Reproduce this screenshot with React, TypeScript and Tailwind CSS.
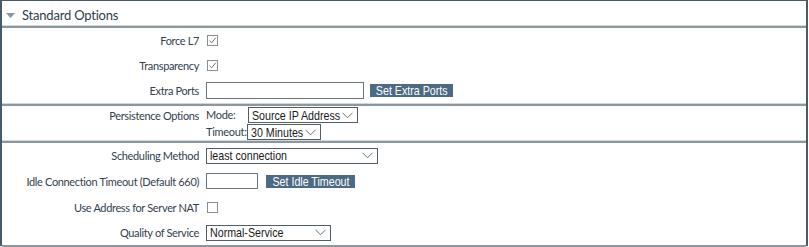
import React from "react";

const labelCls =
  "w-[204px] shrink-0 pr-[7px] text-right text-[11px] text-[#33414f] leading-none whitespace-nowrap tracking-[-0.35px]";
const ctrlFont = {
  fontFamily: '"Liberation Sans", Arial, sans-serif',
};

function Check({ checked }: { checked?: boolean }) {
  return (
    <div className="w-[11px] h-[11px] ml-px border border-[#8a8f94] bg-white flex items-center justify-center shrink-0">
      {checked && (
        <svg width="9" height="9" viewBox="0 0 9 9">
          <path d="M1.5 4.6 L3.6 6.8 L7.8 1.8" fill="none" stroke="#6f767c" strokeWidth="1" />
        </svg>
      )}
    </div>
  );
}

function Select({ text, w }: { text: string; w: number }) {
  return (
    <div
      className="h-[16px] shrink-0 whitespace-nowrap border border-[#4f5d69] bg-white flex items-center pl-[3px] pr-[4px] text-[13px] text-[#1a1a1a] overflow-hidden"
      style={{ ...ctrlFont, width: w }}
    >
      <div className="flex-1 min-w-0 leading-none">
        <span className="inline-block origin-left scale-x-[0.82]">{text}</span>
      </div>
      <svg width="11" height="7" viewBox="0 0 11 7" className="shrink-0">
        <path d="M0.5 0.8 L5.5 5.8 L10.5 0.8" fill="none" stroke="#6a7075" strokeWidth="1" />
      </svg>
    </div>
  );
}

function Btn({ text, w }: { text: string; w: number }) {
  return (
    <div
      className="h-[13px] shrink-0 whitespace-nowrap bg-[#4c6a84] text-white text-[13px] leading-none flex items-center justify-center overflow-visible"
      style={{ ...ctrlFont, width: w }}
    >
      <span className="inline-block origin-center scale-x-[0.82]">{text}</span>
    </div>
  );
}

function Sep() {
  return (
    <div className="shrink-0">
      <div className="h-px bg-[#d3d7da]" />
      <div className="h-[2px] bg-[#8c979d]" />
    </div>
  );
}

export default function App() {
  return (
    <div
      className="w-[809px] h-[247px] bg-white"
      style={{ fontFamily: 'Lato, "Open Sans", sans-serif' }}
    >
      <div className="w-[808px] h-[246px] border-l-2 border-r-2 border-t border-[#475a69] flex flex-col">
        <div className="h-[24px] shrink-0 flex items-center pl-[4px] pt-[5px] gap-[7px]">
          <svg width="9" height="5" viewBox="0 0 9 5">
            <path d="M0 0 L9 0 L4.5 5 Z" fill="#8d959b" />
          </svg>
          <span className="text-[13px] text-[#2f3d4a] leading-none tracking-[-0.2px]">Standard Options</span>
        </div>
        <Sep />
        <div className="flex flex-col h-[75px] shrink-0">
          <div className="h-[25px] flex items-center">
            <div className={labelCls}>Force L7</div>
            <Check checked />
          </div>
          <div className="h-[25px] flex items-center">
            <div className={labelCls}>Transparency</div>
            <Check checked />
          </div>
          <div className="h-[25px] flex items-center">
            <div className={labelCls}>Extra Ports</div>
            <div className="w-[158px] h-[17px] shrink-0 border border-[#6a747b] bg-white mr-[6px]" />
            <Btn text="Set Extra Ports" w={83} />
          </div>
        </div>
        <Sep />
        <div className="flex h-[34px] shrink-0 pt-[1px]">
          <div className={labelCls + " pt-[3px]"}>Persistence Options</div>
          <div className="flex flex-col gap-[1px]">
            <div className="flex items-center h-[16px]">
              <span className="w-[42px] text-[11px] text-[#33414f] whitespace-nowrap tracking-[-0.3px]">Mode:</span>
              <Select text="Source IP Address" w={110} />
            </div>
            <div className="flex items-center h-[16px]">
              <span className="w-[41px] text-[11px] text-[#33414f] whitespace-nowrap tracking-[-0.3px]">Timeout:</span>
              <Select text="30 Minutes" w={74} />
            </div>
          </div>
        </div>
        <Sep />
        <div className="flex flex-col shrink-0">
          <div className="h-[25px] flex items-center">
            <div className={labelCls}>Scheduling Method</div>
            <Select text="least connection" w={172} />
          </div>
          <div className="h-[26px] flex items-center">
            <div className={labelCls}>Idle Connection Timeout (Default 660)</div>
            <div className="w-[52px] h-[16px] shrink-0 border border-[#6a747b] bg-white mr-[8px]" />
            <Btn text="Set Idle Timeout" w={89} />
          </div>
          <div className="h-[26px] flex items-center">
            <div className={labelCls}>Use Address for Server NAT</div>
            <Check />
          </div>
          <div className="h-[25px] flex items-center">
            <div className={labelCls}>Quality of Service</div>
            <Select text="Normal-Service" w={125} />
          </div>
        </div>
        <div className="flex-1" />
        <div className="h-[2px] shrink-0 bg-[#8c979d]" />
      </div>
    </div>
  );
}
